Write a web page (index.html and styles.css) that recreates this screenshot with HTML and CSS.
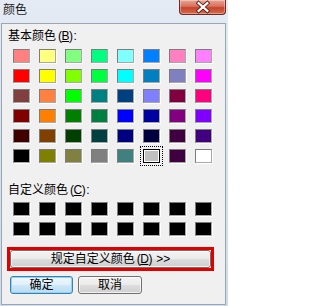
FILE: index.html
```html
<!DOCTYPE html>
<html lang="zh-CN">
<head>
<meta charset="utf-8">
<title>颜色</title>
<link rel="stylesheet" href="styles.css">
</head>
<body>
<div class="window">
  <div class="titlebar">
    <span class="title">颜色</span>
    <div class="close">
      <svg width="47" height="15" viewBox="0 0 47 15">
        <path d="M20 3 L29 11 M29 3 L20 11" stroke="#5a1a10" stroke-width="4" stroke-linecap="square"/>
        <path d="M20 3 L29 11 M29 3 L20 11" stroke="#ffffff" stroke-width="2.2" stroke-linecap="square"/>
      </svg>
    </div>
  </div>
  <div class="client">
    <div class="label first">基本颜色<span class="acc">(<u>B</u>)</span>:</div>
    <div class="grid basic">
      <span class="sw" style="background:#ff8080"></span>
      <span class="sw" style="background:#ffff80"></span>
      <span class="sw" style="background:#80ff80"></span>
      <span class="sw" style="background:#00ff80"></span>
      <span class="sw" style="background:#80ffff"></span>
      <span class="sw" style="background:#0080ff"></span>
      <span class="sw" style="background:#ff80c0"></span>
      <span class="sw" style="background:#ff80ff"></span>

      <span class="sw" style="background:#ff0000"></span>
      <span class="sw" style="background:#ffff00"></span>
      <span class="sw" style="background:#80ff00"></span>
      <span class="sw" style="background:#00ff40"></span>
      <span class="sw" style="background:#00ffff"></span>
      <span class="sw" style="background:#0080c0"></span>
      <span class="sw" style="background:#8080c0"></span>
      <span class="sw" style="background:#ff00ff"></span>

      <span class="sw" style="background:#804040"></span>
      <span class="sw" style="background:#ff8040"></span>
      <span class="sw" style="background:#00ff00"></span>
      <span class="sw" style="background:#008080"></span>
      <span class="sw" style="background:#004080"></span>
      <span class="sw" style="background:#8080ff"></span>
      <span class="sw" style="background:#800040"></span>
      <span class="sw" style="background:#ff0080"></span>

      <span class="sw" style="background:#800000"></span>
      <span class="sw" style="background:#ff8000"></span>
      <span class="sw" style="background:#008000"></span>
      <span class="sw" style="background:#008040"></span>
      <span class="sw" style="background:#0000ff"></span>
      <span class="sw" style="background:#0000a0"></span>
      <span class="sw" style="background:#800080"></span>
      <span class="sw" style="background:#8000ff"></span>

      <span class="sw" style="background:#400000"></span>
      <span class="sw" style="background:#804000"></span>
      <span class="sw" style="background:#004000"></span>
      <span class="sw" style="background:#004040"></span>
      <span class="sw" style="background:#000080"></span>
      <span class="sw" style="background:#000040"></span>
      <span class="sw" style="background:#400040"></span>
      <span class="sw" style="background:#400080"></span>

      <span class="sw" style="background:#000000"></span>
      <span class="sw" style="background:#808000"></span>
      <span class="sw" style="background:#808040"></span>
      <span class="sw" style="background:#808080"></span>
      <span class="sw" style="background:#408080"></span>
      <span class="sw selected" style="background:#c0c0c0"></span>
      <span class="sw" style="background:#400040"></span>
      <span class="sw" style="background:#ffffff"></span>
    </div>

    <div class="label second">自定义颜色<span class="acc">(<u>C</u>)</span>:</div>
    <div class="grid custom">
      <span class="sw"></span><span class="sw"></span><span class="sw"></span><span class="sw"></span>
      <span class="sw"></span><span class="sw"></span><span class="sw"></span><span class="sw"></span>
      <span class="sw"></span><span class="sw"></span><span class="sw"></span><span class="sw"></span>
      <span class="sw"></span><span class="sw"></span><span class="sw"></span><span class="sw"></span>
    </div>

    <div class="highlight">
      <button class="btn wide">规定自定义颜色<span class="acc">(<u>D</u>)</span> &gt;&gt;</button>
    </div>

    <div class="actions">
      <button class="btn default">确定</button>
      <button class="btn cancel">取消</button>
    </div>
  </div>
</div>
</body>
</html>
```

FILE: styles.css
```css
html, body {
  margin: 0;
  padding: 0;
}

body {
  width: 228px;
  height: 306px;
  overflow: hidden;
  font-family: "Liberation Sans", "Noto Sans CJK SC", sans-serif;
  font-size: 12px;
  color: #000;
}

.window {
  width: 228px;
  height: 306px;
  box-sizing: border-box;
  padding: 0 2px 1px 1px;
  display: flex;
  flex-direction: column;
  background: linear-gradient(180deg, #e4ebf4 0%, #d9e3ef 40%, #cfdbea 100%);
}

.titlebar {
  height: 23px;
  flex: none;
  display: flex;
  justify-content: space-between;
  align-items: flex-start;
}

.title {
  font-family: "Noto Sans CJK SC", sans-serif;
  font-size: 12px;
  line-height: 15px;
  padding: 1px 0 0 2px;
  color: #1a1a1a;
}

.close {
  width: 47px;
  height: 15px;
  box-sizing: border-box;
  border: 1px solid #6d2a22;
  border-top: none;
  border-radius: 0 0 4px 4px;
  background: linear-gradient(180deg, #e8a597 0%, #d9705c 45%, #c5442a 55%, #d66b4c 100%);
  box-shadow: inset 0 0 0 1px rgba(255, 255, 255, 0.35);
  display: flex;
}

.close svg {
  display: block;
  margin-left: -1px;
}

.client {
  flex: 1;
  box-sizing: border-box;
  border: 1px solid #9aa6b4;
  background: #f0f0f0;
  display: flex;
  flex-direction: column;
  align-items: flex-start;
}

.label {
  line-height: 15px;
  padding-left: 6px;
  white-space: nowrap;
}

.label.first {
  margin-top: 5px;
}

.label.second {
  margin-top: 20px;
}

.acc {
  letter-spacing: -0.5px;
  margin: 0 1px 0 2px;
}

.grid {
  display: grid;
  grid-template-columns: repeat(8, 17px);
  grid-auto-rows: 14px;
  column-gap: 9px;
  row-gap: 6px;
  margin-left: 11px;
}

.grid.basic {
  margin-top: 5px;
}

.grid.custom {
  margin-top: 4px;
}

.sw {
  display: block;
  box-sizing: border-box;
  border: 1px solid #7c7c7c;
  border-right-color: #a8a8a8;
  border-bottom-color: #a8a8a8;
  background: #000;
  box-shadow: 1px 1px 0 #ffffff;
}

.sw.selected {
  border: 1px solid #000;
  box-shadow: inset 0 0 0 1px #ffffff;
  outline: 1px dotted #000;
  outline-offset: 2px;
}

.highlight {
  margin: 11px 0 0 5px;
  border: 3px solid #e00000;
  width: 207px;
  box-sizing: border-box;
  display: flex;
}

.btn {
  font-family: "Liberation Sans", "Noto Sans CJK SC", sans-serif;
  font-size: 12px;
  line-height: 14px;
  height: 18px;
  padding: 0;
  margin: 0;
  color: #000;
  box-sizing: border-box;
  border: 1px solid #707070;
  border-radius: 3px;
  background: linear-gradient(180deg, #f3f3f3 0%, #ebebeb 48%, #dddddd 52%, #cfcfcf 100%);
  box-shadow: inset 0 0 0 1px rgba(255, 255, 255, 0.7);
}

.btn.wide {
  width: 201px;
}

.actions {
  display: flex;
  gap: 5px;
  margin: 5px 0 0 8px;
}

.btn.default {
  width: 63px;
  border-color: #3c7fb1;
  background: linear-gradient(180deg, #eef7fd 0%, #e1f0fb 48%, #cde7f8 52%, #b9dcf3 100%);
  box-shadow: inset 0 0 0 1px #8fd4f3;
}

.btn.cancel {
  width: 64px;
}
```
